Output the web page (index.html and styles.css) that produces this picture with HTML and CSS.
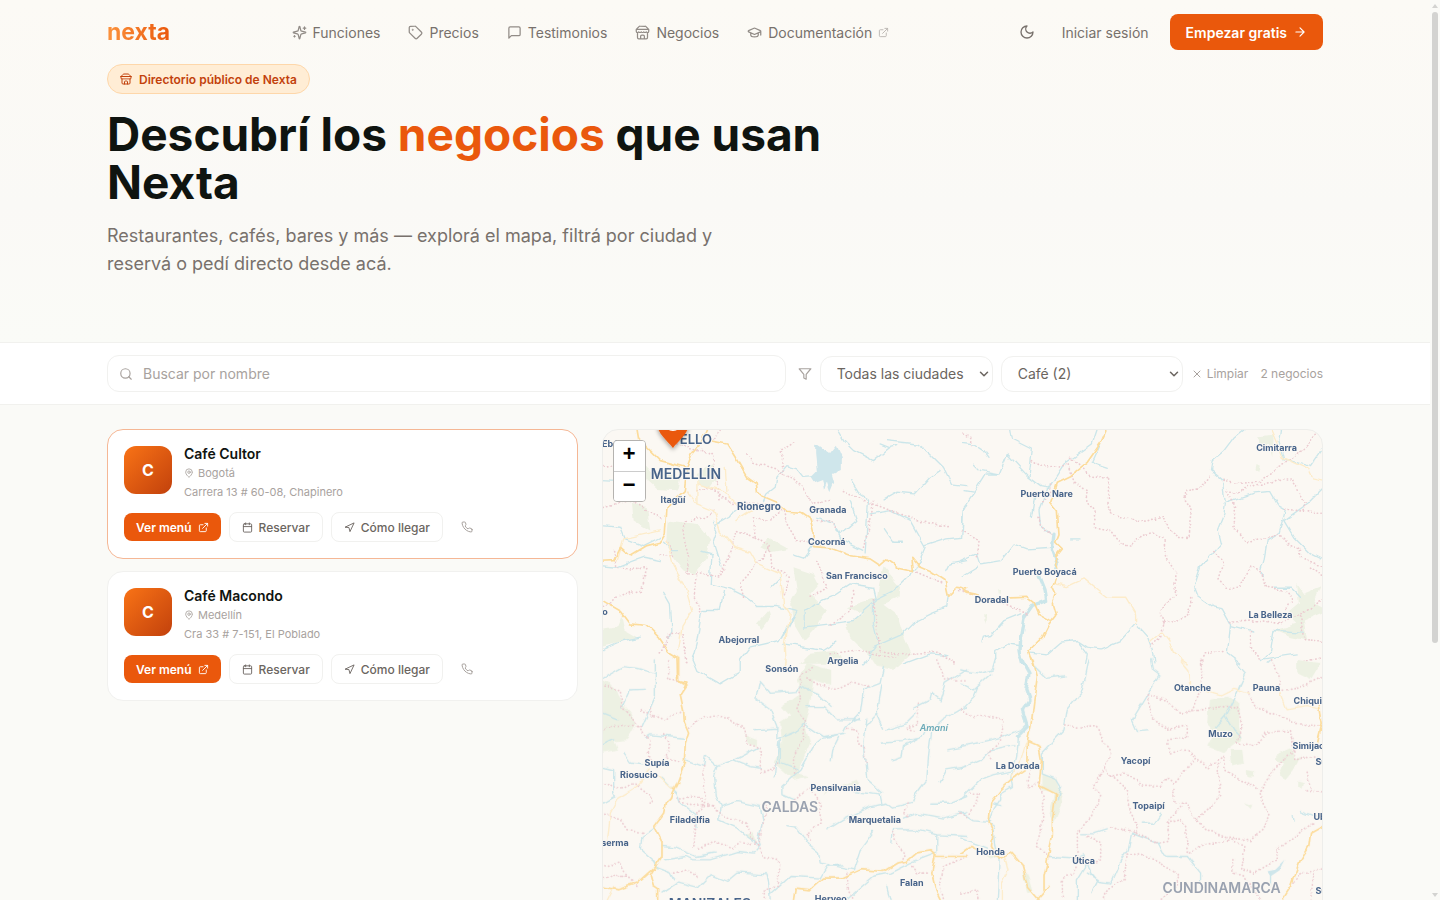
FILE: index.html
```html
<!DOCTYPE html>
<html lang="es">
<head>
<meta charset="utf-8">
<meta name="viewport" content="width=device-width, initial-scale=1">
<title>Directorio de negocios — Nexta</title>
<link rel="stylesheet" href="styles.css">
</head>
<body>
<svg class="sprite" aria-hidden="true">
  <symbol id="sparkles" viewBox="0 0 24 24"><path d="M9.94 15.5A2 2 0 0 0 8.5 14.06l-6.14-1.58a.5.5 0 0 1 0-.96L8.5 9.94A2 2 0 0 0 9.94 8.5l1.58-6.14a.5.5 0 0 1 .96 0L14.06 8.5a2 2 0 0 0 1.44 1.44l6.14 1.58a.5.5 0 0 1 0 .96L15.5 14.06a2 2 0 0 0-1.44 1.44l-1.58 6.14a.5.5 0 0 1-.96 0zM20 3v4M22 5h-4M4 17v2M5 18H3"/></symbol>
  <symbol id="tag" viewBox="0 0 24 24"><path d="M12.59 2.59A2 2 0 0 0 11.17 2H4a2 2 0 0 0-2 2v7.17a2 2 0 0 0 .59 1.42l8.7 8.7a2.43 2.43 0 0 0 3.42 0l6.58-6.58a2.43 2.43 0 0 0 0-3.42z"/><circle cx="7.5" cy="7.5" r=".5"/></symbol>
  <symbol id="message" viewBox="0 0 24 24"><path d="M21 15a2 2 0 0 1-2 2H7l-4 4V5a2 2 0 0 1 2-2h14a2 2 0 0 1 2 2z"/></symbol>
  <symbol id="store" viewBox="0 0 24 24"><path d="m2 7 4.41-4.41A2 2 0 0 1 7.83 2h8.34a2 2 0 0 1 1.42.59L22 7M4 12v8a2 2 0 0 0 2 2h12a2 2 0 0 0 2-2v-8M15 22v-4a2 2 0 0 0-2-2h-2a2 2 0 0 0-2 2v4M2 7h20M22 7v3a2 2 0 0 1-2 2 2.7 2.7 0 0 1-1.59-.63.7.7 0 0 0-.82 0A2.7 2.7 0 0 1 16 12a2.7 2.7 0 0 1-1.59-.63.7.7 0 0 0-.82 0A2.7 2.7 0 0 1 12 12a2.7 2.7 0 0 1-1.59-.63.7.7 0 0 0-.82 0A2.7 2.7 0 0 1 8 12a2.7 2.7 0 0 1-1.59-.63.7.7 0 0 0-.82 0A2.7 2.7 0 0 1 4 12a2 2 0 0 1-2-2V7"/></symbol>
  <symbol id="cap" viewBox="0 0 24 24"><path d="M21.42 10.92a1 1 0 0 0-.02-1.84L12.83 5.18a2 2 0 0 0-1.66 0L2.6 9.08a1 1 0 0 0 0 1.83l8.57 3.91a2 2 0 0 0 1.66 0zM22 10v6M6 12.5V16a6 3 0 0 0 12 0v-3.5"/></symbol>
  <symbol id="external" viewBox="0 0 24 24"><path d="M15 3h6v6M10 14 21 3M18 13v6a2 2 0 0 1-2 2H5a2 2 0 0 1-2-2V8a2 2 0 0 1 2-2h6"/></symbol>
  <symbol id="moon" viewBox="0 0 24 24"><path d="M12 3a6 6 0 0 0 9 9 9 9 0 1 1-9-9"/></symbol>
  <symbol id="arrow" viewBox="0 0 24 24"><path d="M5 12h14M12 5l7 7-7 7"/></symbol>
  <symbol id="search" viewBox="0 0 24 24"><circle cx="11" cy="11" r="8"/><path d="m21 21-4.3-4.3"/></symbol>
  <symbol id="funnel" viewBox="0 0 24 24"><path d="M22 3H2l8 9.46V19l4 2v-8.54z"/></symbol>
  <symbol id="close" viewBox="0 0 24 24"><path d="M18 6 6 18M6 6l12 12"/></symbol>
  <symbol id="chevron" viewBox="0 0 24 24"><path d="m5 8.500 7 7 7-7"/></symbol>
  <symbol id="pin" viewBox="0 0 24 24"><path d="M20 10c0 5-5.54 10.190-7.400 11.800a1 1 0 0 1-1.200 0C9.540 20.190 4 15 4 10a8 8 0 0 1 16 0"/><circle cx="12" cy="10" r="3"/></symbol>
  <symbol id="calendar" viewBox="0 0 24 24"><path d="M8 2v4M16 2v4M3 10h18"/><rect x="3" y="4" width="18" height="18" rx="2"/></symbol>
  <symbol id="navigate" viewBox="0 0 24 24"><path d="m3 11 19-9-9 19-2-8z"/></symbol>
  <symbol id="phone" viewBox="0 0 24 24"><path d="M22 16.920v3a2 2 0 0 1-2.180 2 19.790 19.790 0 0 1-8.630-3.070 19.500 19.500 0 0 1-6-6 19.790 19.790 0 0 1-3.070-8.670A2 2 0 0 1 4.110 2h3a2 2 0 0 1 2 1.720c.127.960.361 1.903.700 2.810a2 2 0 0 1-.450 2.110L8.090 9.910a16 16 0 0 0 6 6l1.270-1.270a2 2 0 0 1 2.110-.450c.907.339 1.850.573 2.810.700A2 2 0 0 1 22 16.920z"/></symbol>
</svg>

<div class="page">
  <div class="top">
    <header class="container header">
      <a class="brand" href="#">nexta</a>
      <nav class="nav" aria-label="Principal">
        <a href="#"><svg class="icon"><use href="#sparkles"/></svg>Funciones</a>
        <a href="#"><svg class="icon"><use href="#tag"/></svg>Precios</a>
        <a href="#"><svg class="icon"><use href="#message"/></svg>Testimonios</a>
        <a href="#"><svg class="icon"><use href="#store"/></svg>Negocios</a>
        <a href="#"><svg class="icon"><use href="#cap"/></svg>Documentación<svg class="icon icon-ext"><use href="#external"/></svg></a>
      </nav>
      <div class="actions">
        <button class="theme" type="button" aria-label="Cambiar tema"><svg class="icon"><use href="#moon"/></svg></button>
        <a class="login" href="#">Iniciar sesión</a>
        <a class="cta" href="#">Empezar gratis<svg class="icon"><use href="#arrow"/></svg></a>
      </div>
    </header>
    <section class="container hero">
      <span class="badge"><svg class="icon"><use href="#store"/></svg>Directorio público de Nexta</span>
      <h1>Descubrí los <span>negocios</span> que usan Nexta</h1>
      <p>Restaurantes, cafés, bares y más — explorá el mapa, filtrá por ciudad y reservá o pedí directo desde acá.</p>
    </section>
  </div>

  <div class="filters">
    <form class="container filter-row">
      <div class="search">
        <svg class="icon"><use href="#search"/></svg>
        <input type="text" aria-label="Buscar por nombre" placeholder="Buscar por nombre">
      </div>
      <svg class="icon funnel"><use href="#funnel"/></svg>
      <div class="select">
        <select aria-label="Ciudad"><option>Todas las ciudades</option><option>Bogotá</option><option>Medellín</option></select>
        <svg class="icon"><use href="#chevron"/></svg>
      </div>
      <div class="select select-wide">
        <select aria-label="Categoría"><option>Café (2)</option></select>
        <svg class="icon"><use href="#chevron"/></svg>
      </div>
      <button class="clear" type="button"><svg class="icon"><use href="#close"/></svg>Limpiar</button>
      <span class="count">2 negocios</span>
    </form>
  </div>

  <main class="container results">
    <div class="list">
      <article class="card card-active">
        <div class="summary">
          <div class="avatar">C</div>
          <div class="info">
            <h2>Café Cultor</h2>
            <p class="city"><svg class="icon"><use href="#pin"/></svg>Bogotá</p>
            <p>Carrera 13 # 60-08, Chapinero</p>
          </div>
        </div>
        <div class="links">
          <a class="btn btn-main" href="#">Ver menú<svg class="icon"><use href="#external"/></svg></a>
          <a class="btn" href="#"><svg class="icon"><use href="#calendar"/></svg>Reservar</a>
          <a class="btn" href="#"><svg class="icon"><use href="#navigate"/></svg>Cómo llegar</a>
          <a class="call" href="#" aria-label="Llamar"><svg class="icon"><use href="#phone"/></svg></a>
        </div>
      </article>
      <article class="card">
        <div class="summary">
          <div class="avatar">C</div>
          <div class="info">
            <h2>Café Macondo</h2>
            <p class="city"><svg class="icon"><use href="#pin"/></svg>Medellín</p>
            <p>Cra 33 # 7-151, El Poblado</p>
          </div>
        </div>
        <div class="links">
          <a class="btn btn-main" href="#">Ver menú<svg class="icon"><use href="#external"/></svg></a>
          <a class="btn" href="#"><svg class="icon"><use href="#calendar"/></svg>Reservar</a>
          <a class="btn" href="#"><svg class="icon"><use href="#navigate"/></svg>Cómo llegar</a>
          <a class="call" href="#" aria-label="Llamar"><svg class="icon"><use href="#phone"/></svg></a>
        </div>
      </article>
    </div>

    <div class="map">
      <svg class="map-canvas" viewBox="602 430 720 640" preserveAspectRatio="xMinYMin slice" role="img" aria-label="Mapa de negocios">
        <defs>
          <filter id="rough" filterUnits="userSpaceOnUse" x="590" y="420" width="750" height="500" color-interpolation-filters="sRGB">
            <feTurbulence type="fractalNoise" baseFrequency="0.08" numOctaves="2" seed="4"/>
            <feDisplacementMap in="SourceGraphic" scale="6" xChannelSelector="R" yChannelSelector="G"/>
          </filter>
          <filter id="shade" x="-50%" y="-50%" width="200%" height="200%"><feDropShadow dx="0" dy="2" stdDeviation="2" flood-color="#000" flood-opacity=".35"/></filter>
        </defs>
        <g filter="url(#rough)">
          <g transform="translate(596 424) scale(.33333)">
            <path class="park" d="M215 290L300 300L340 350L330 400L290 450L250 430L210 370ZM105 240L150 250L160 320L110 290ZM590 430L650 450L665 480L640 510L690 560L650 620L620 650L590 600L580 540L600 500ZM860 430L910 490L905 520L860 540L900 570L915 620L945 690L900 730L820 700L760 640L750 600L800 570L750 550L840 520L850 470ZM640 690L720 680L740 720L610 720ZM10 620L60 610L75 570L85 620L120 640L50 660L10 670ZM490 370L520 345L575 375L520 385ZM480 600L515 560L520 580L490 620ZM110 80L160 140L250 160L240 200L180 195L130 150ZM300 150L350 120L370 150L340 190L300 180Z"/>
            <path class="lake" d="M655 60L700 90L720 65L735 100L735 135L705 150L712 175L700 205L690 175L682 198L676 165L650 175L640 160L660 140L655 90Z"/>
            <path class="river" d="M10 170L60 172L110 210M10 305L70 310L85 345L140 365L190 340M10 425L60 430L110 410L140 400L190 410M315 382L345 390L340 480L400 495L440 515L480 545L540 545L600 560L550 650L460 670L430 710L430 745L370 780L300 740L285 705L300 650L315 560L370 560L380 500M200 505L220 540L225 620L215 640M350 295L360 320L350 350L375 430M430 240L400 280L355 305M500 230L510 210L535 190L540 160L570 125L600 135L620 160L650 158M765 170L790 210L815 225L810 310L805 390M660 280L710 300L730 330L780 290L760 230M720 320L735 350L800 380M865 225L900 205L955 210L1000 160L1030 140M720 15L740 50L770 80L830 110L880 70L900 65M850 60L880 72M870 50L960 60L1000 90L1040 130L1065 180L1110 185M820 270L880 260L940 290L985 370L960 430L890 500L830 530L830 600L845 660L800 720M985 365L1050 345L1095 340L1100 260L1110 240M1050 440L1060 420L1110 410M590 390L620 400L650 360M620 610L700 600L770 590L840 530L830 490L760 480L700 520L650 540L625 560L625 610M830 670L920 630L960 590L1000 570L1050 550L1055 510M860 310L890 355L920 355M200 355L225 380L245 380M550 460L520 490M560 660L680 680L720 655M10 680L80 650L130 640M600 560L560 640M920 720L1000 690L1050 695"/>
            <path class="border" d="M240 15L240 60L350 90L360 190L370 230M300 200L340 190L400 235L510 240M10 130L60 120L80 160L60 190M50 380L60 430L150 435L130 500L80 510L10 550M190 390L230 400L210 350M265 290L260 340L275 400L270 450L300 450L290 500L310 570M300 445L370 460L400 380L415 320L475 340L470 280L520 290L560 250M350 260L330 280L280 290M475 340L520 370L525 430L580 460L560 520M440 520L430 480L490 410L520 370M450 90L470 115L540 135L560 150L620 190L640 235L700 230M560 260L570 300L600 350L650 360M830 230L820 300L800 370M740 200L830 240L960 290L1060 310M660 410L680 460L690 490L640 520M770 500L760 560L700 600M830 530L840 600L850 680L900 690L1020 685L1080 720M960 445L1040 480M700 690L770 680L900 700M190 690L220 625L260 630L270 720M560 150L550 80L600 50M370 15L350 50M10 250L100 230L200 290M650 290L700 290L720 320"/>
            <path class="minor" d="M300 170L300 240L350 260L370 320L410 370L460 385L480 420L550 450L560 540L580 570L565 660L568 720M210 350L230 430L262 480L285 560L255 610L245 680M300 180L380 200L420 240L465 260L420 290M300 240L270 200M60 410L80 345L190 320M385 130L390 200"/>
            <path class="road" d="M120 15L125 45L190 110L265 130M330 15L310 60L285 90L270 130L262 200L210 250L205 330L190 355L150 365L100 395L70 370L50 410L10 412M340 50L390 60L415 100L450 160L478 180L482 210L540 235L570 262L610 265L640 285L652 330L650 368L700 372L760 395L820 405L850 425L870 408L900 430L950 440L945 400L965 425L1000 440L1045 470L1055 515L1080 490L1110 495M10 525L70 560L100 600L150 605L185 640L215 685L240 700L242 770L270 775L250 810"/>
          </g>
          <g transform="translate(960 424) scale(.33333)">
            <path class="park" d="M1010 480L1030 510L1080 490L1060 540L1100 560L1030 590L1040 650L990 640L940 620L1010 600L980 570L1015 540ZM890 40L940 35L935 100L925 60L895 60ZM885 120L895 125L890 145L882 135ZM112 495L118 500L115 510ZM68 570L76 575L74 600L68 590Z"/>
            <path class="river river-wide" d="M280 325L275 380L290 420L282 440M232 455L250 500L255 530L215 545L190 580L180 640L178 680L185 720"/>
            <path class="river" d="M410 15L395 60L340 100L310 120L265 190L240 185L200 155L140 90L115 150L75 150L40 205L10 200M115 150L60 140L40 120M5 320L8 250L40 205M150 15L155 45L215 75L205 155M420 60L395 115L440 130M0 55L40 60L70 80L85 100M265 180L235 260L240 310L280 330M225 220L215 280M275 370L200 375L160 360L120 410L60 420L50 390L0 412M0 460L50 430M330 345L355 345M180 570L130 590L90 635L65 640L60 658M105 720L105 680L140 660L175 665M210 685L260 690L300 655L350 650L380 670L420 675L480 650L525 600L560 640L575 680L580 720M350 650L380 690L375 720M850 15L820 40L790 80L755 110L750 140L785 170L795 240L790 270L770 320L780 360L720 430L700 490L710 515L760 550L785 555L810 600L800 690L840 720M790 240L880 210L930 205L950 240L975 255L955 330L920 350L910 410L900 445L910 455M970 290L1000 340L1050 390L1080 405M970 290L1040 240L1090 190M960 15L955 50L970 105L1050 128L1090 70M810 605L880 625M900 710L930 680L940 620L1030 625M910 705L1010 690M940 490L990 490L1020 520"/>
            <path class="border" d="M10 30L30 40L30 70M215 110L240 130L310 125L325 120L340 175L380 200L375 235L400 260L405 310L450 320L480 365L515 370L540 335L580 325L610 345L615 400L650 445L640 480L650 510L595 560L610 600L600 640L570 670M330 100L380 150L445 165L440 200L450 270L490 285L560 292L610 275L625 320L660 342L685 340L695 260L670 225L680 200L715 195L750 155M610 600L680 580L695 515M790 172L830 178L900 175L980 110L1010 95L1065 30M800 200L830 205L860 185L900 185L960 165L995 165L1035 240L1025 265M800 200L825 250L820 310L860 358L900 350L955 330L990 365L1020 375L1020 400L1090 430M975 255L1050 265L1090 265M760 380L790 420L775 470L795 490L840 490L870 430L905 450L915 490L980 500L995 530L975 560M810 595L900 590L960 600L1040 560L1090 520M870 625L870 670L900 710M720 720L730 690L795 682M1020 575L1030 650L1090 655M1050 430L1090 460M0 320L55 350L50 400M0 500L40 510L130 540L200 570M235 280L240 310L280 330M270 180L270 210L240 240M1020 715L1090 700"/>
            <path class="minor" d="M280 480L320 488L370 465L420 505L440 520L495 520L525 570L525 600M570 655L605 625L625 650L640 690L680 720M930 15L950 60L965 100L1040 135L1055 165L1090 172"/>
            <path class="road" d="M440 15L425 50L380 115L330 155L290 175L270 235L290 260L295 330L285 355L305 375L285 400L292 440L275 490L285 510L275 540L285 575L265 600L245 640L205 680L220 725M0 490L20 505L55 512M150 522L200 520L220 535L235 570L268 588"/>
          </g>
          <g transform="translate(596 660) scale(.33333)">
            <path class="park" d="M10 60L60 90L75 130L100 160L115 195L90 240L50 245L60 270L10 280ZM630 10L700 30L700 75L650 60L640 130L625 190L640 250L600 340L635 350L590 360L530 310L555 250L550 190L580 170L555 140L610 100L600 60ZM440 225L480 240L480 255L455 250ZM440 525L470 520L480 550ZM820 -10L910 -10L890 30L840 20ZM780 360L790 375L700 390L680 410L690 390Z"/>
            <path class="river" d="M175 0L175 110L135 200M10 60L80 20L120 25L175 40M10 160L60 180M75 145L100 90L145 88M10 260L50 240M145 235L160 225L260 235M10 320L50 330L50 400L55 410L20 430M265 300L320 320L325 290L360 320L410 300L485 260M360 320L350 350L355 410L370 440L420 425L490 440L498 480L485 540L490 555L470 580L420 575L340 600L290 600L270 590L205 600M195 355L240 400L250 430L300 470L300 500M370 440L365 480L420 505L450 530L485 555M410 300L460 320L490 325M350 580L300 590L240 565L195 560M80 280L100 310L140 315M170 505L135 530L130 570L170 605L180 625L220 640L230 660M195 700L240 670L300 685L340 645L390 665L420 640L510 645L515 665L520 720M520 705L580 650L670 655L690 620L740 615M570 500L600 505L640 560L665 580L670 610L770 630L790 570L830 515M690 510L740 480L820 440L870 430L890 445L950 430L960 400L990 360L995 290L1005 210L1040 180L1110 140M770 395L850 405L855 430M855 400L810 360L800 260L810 180M750 200L740 220L680 235L650 260L610 330L555 380L555 405L590 420M750 200L790 160L800 90L850 70L860 20M490 70L480 120L520 150L540 200L540 240L600 215L620 190L680 230L750 220M470 210L540 205M550 240L550 310L600 330M550 240L535 350M630 140L680 140L720 180L790 180M490 65L520 100L600 95L610 80L660 100L700 140M725 230L705 270L700 300M300 590L355 580M790 175L760 190M855 75L840 160L860 205M845 160L810 200M870 210L930 190L960 160M850 250L920 245L970 235L990 195M885 300L915 290L920 260L960 240M950 145L1000 120L1005 100L1030 120L1045 70L1110 30M1050 270L1110 260M1030 365L1050 330L1110 320M1005 430L1060 430L1110 410M920 475L960 460L1040 475L1110 455M885 550L890 510L960 510L1020 525L1110 530M1020 525L1020 580L940 610L880 640L830 650L750 720M870 680L880 720"/>
            <path class="border" d="M215 0L215 60L250 65M10 80L70 90L75 140L130 210L155 240L160 320M130 200L30 200L10 230M130 150L200 180L260 150M275 205L320 170L400 175L440 210L450 250L490 260L490 340L530 330L545 310M160 145L165 175M200 225L220 260L210 290L250 310M10 370L80 385L110 370L140 390L170 420L150 430M10 460L70 480L90 510L140 515M320 320L325 430L350 435M240 415L310 410L320 440L300 460L290 570M250 425L290 440L350 435M350 435L360 460L450 490L460 530L485 555L430 545L410 565L350 545L300 570M485 555L510 440L500 430M485 555L500 590L545 600L545 680L505 690L505 720M590 420L640 385L670 430L670 490L630 525L640 545M610 50L610 120L600 150L625 190L620 230L590 290L590 350M610 50L650 20M630 60L720 90L760 70L810 75L820 80M755 205L780 215L780 250L805 265L805 310M1020 0L1045 60L1110 60M965 130L965 190L930 205L960 215M890 520L905 560L925 580L920 610M930 470L920 460L935 430M750 640L755 690L770 720M10 620L70 610L90 650L60 650M230 640L270 630L300 650M1110 590L1040 620L1030 680L1040 720M945 620L960 640L1000 640M10 650L90 650L120 680"/>
            <path class="minor" d="M30 560L40 460L60 420L110 390L160 330M185 350L230 390M565 0L560 30M30 720L50 680"/>
            <path class="road" d="M245 -5L245 60L270 75L250 105L260 150L262 190L275 220L265 250L262 310L240 370L225 400L220 420L205 435L200 460L170 500L195 550L195 590L175 620L160 645L170 680L185 690L185 720M175 620L120 670L60 690L10 680M590 720L595 685L640 690L680 655L735 655L790 630L860 635L900 610L930 605L960 580L1000 573L1020 590L1110 590M1015 590L1005 640L1020 700L1030 720"/>
          </g>
          <g transform="translate(960 660) scale(.33333)">
            <path class="park" d="M745 120L800 110L840 130L835 200L845 240L790 280L740 260L760 220L740 190ZM810 270L845 270L850 310L815 320ZM955 280L990 265L1000 300L1020 290L1000 330L975 360L955 350L970 310L945 300ZM855 330L878 335L878 350L858 350ZM1010 365L1030 370L1025 385L1010 380ZM245 340L290 355L300 400L305 430L280 490L265 470L280 400L245 395ZM60 580L110 590L90 600ZM185 640L200 640L215 690L200 700ZM1010 0L1080 10L1050 60L1010 40ZM850 430L875 440L870 450Z"/>
            <path class="lake" d="M920 635L945 630L975 600L960 630L930 650Z"/>
            <path class="river river-wide" d="M180 -5L205 40L195 90L205 120L185 150L200 200L170 230"/>
            <path class="river" d="M105 -5L95 30L60 40L20 35L0 30M0 70L40 90L90 45M10 140L40 110L50 85M170 230L165 290L150 350L155 380L120 400L120 420L100 450L85 490L100 500L105 560L115 600L110 720M0 260L90 240L130 230L180 210L200 190M0 325L60 300L90 270L160 255M0 420L60 360L100 345L165 330M0 455L40 480L90 485M225 20L260 55L310 48M385 0L365 95L320 150L310 210L245 280L245 340L285 355L300 380L290 420M120 440L95 435M0 535L40 550L80 565M265 590L350 595L370 585L375 620L350 660L350 720M380 610L390 640L410 665L450 670L480 600L500 570L510 520L590 550L605 580L620 590L680 590L720 640L720 690M380 640L410 660L390 700M360 522L400 522L440 510M545 490L580 490L600 460M570 0L575 30L595 45L560 105L515 180L530 215L565 213M820 0L855 40L830 95L795 165L765 200M795 170L820 210L840 230M930 640L930 680M1020 455L1060 470L1090 475M995 470L998 485M920 10L930 0"/>
            <path class="border" d="M0 150L40 170L70 165L130 180L120 240L80 280L90 300M315 198L350 205L410 200L430 250L450 280L430 325L450 350L490 340L540 375L600 380L620 355L640 370L705 295L745 325L770 300L790 290M430 325L400 380L420 410L390 470L350 520L350 570L340 640L305 660L305 720M450 350L500 390L510 460L530 490L520 530M560 105L575 180L620 205L680 200L680 230L625 240L625 280L680 270L705 295M560 105L610 120L660 160L700 150L725 60L720 0M680 160L720 150L830 140L845 200L830 250L880 255L920 220L990 210L1000 270L940 330L895 400L925 460L910 510L870 540L800 535L740 510L705 480L680 430L640 430L640 380M790 290L790 330L860 370L900 395M770 300L780 410L740 450L705 480M620 490L660 480L675 500L680 580L740 550L810 540L850 560L840 630L880 640L950 600L950 570L1060 490M500 580L560 590L650 640L650 680L600 720M500 580L490 660L440 690L430 720M450 505L500 510L590 550L620 545L625 480L660 440M380 530L420 545L420 600L400 610M0 460L20 470L60 400L20 400M200 380L235 370L250 420L240 500L230 560L265 590M210 330L200 375M0 700L50 690L55 720M930 0L955 45L960 95L1000 90L1090 50M865 95L880 140L960 170L1000 190L1090 200M990 210L1000 300L1060 290L1090 310M1040 390L1090 400M1040 340L1050 390M1000 670L1020 640L1090 630M820 600L820 640L850 650L900 720M1050 720L1060 640"/>
            <path class="minor" d="M660 0L685 30L690 75M730 90L780 105L820 85L870 100M915 80L960 100L980 150L1040 140L1075 150M195 250L180 300L150 350M135 590L145 630L125 670L125 720"/>
            <path class="road" d="M215 -5L230 50L220 120L210 200L200 245L198 330L160 355L120 390L90 430L85 490L100 520L95 560L115 595L150 580L185 620L200 680L235 720M200 245L235 260L242 300L235 380L285 405L275 480L275 530L260 600L250 650L250 690M0 580L30 560L60 575L110 590M265 680L230 720M1075 130L1085 190L1070 250M1095 495L1050 520L1045 560L1020 600L1000 650L990 680L965 720"/>
          </g>
        </g>
        <g class="labels">
          <text class="city-md" x="695" y="444">ELLO</text><text class="cut" x="601" y="447">Ebéjico</text>
          <text class="city-lg" x="685" y="479">MEDELLÍN</text>
          <text x="672" y="503">Itagüí</text><text class="town" x="758" y="510">Rionegro</text><text x="827" y="513">Granada</text>
          <text x="826" y="545">Cocorná</text><text x="856" y="579">San Francisco</text><text x="738" y="643">Abejorral</text>
          <text x="842" y="664">Argelia</text><text x="781" y="672">Sonsón</text><text x="604" y="615">o</text>
          <text x="1276" y="451">Cimitarra</text><text x="1046" y="497">Puerto Nare</text><text x="1044" y="575">Puerto Boyacá</text>
          <text x="991" y="603">Doradal</text><text x="1270" y="618">La Belleza</text>
          <text x="656" y="766">Supía</text><text x="638" y="778">Riosucio</text><text x="835" y="791">Pensilvania</text>
          <text x="689" y="823">Filadelfia</text><text x="874" y="823">Marquetalia</text><text x="614" y="846">serma</text>
          <text x="911" y="886">Falan</text><text x="830" y="902">Herveo</text><text x="1017" y="769">La Dorada</text>
          <text x="990" y="855">Honda</text><text x="1083" y="864">Útica</text><text x="1135" y="764">Yacopí</text>
          <text x="1148" y="809">Topaipí</text><text x="1192" y="691">Otanche</text><text x="1266" y="691">Pauna</text>
          <text x="1220" y="737">Muzo</text>
          <text class="cut" x="1293" y="704">Chiquinquirá</text><text class="cut" x="1292" y="749">Simijaca</text>
          <text class="cut" x="1315" y="765">Susa</text><text class="cut" x="1313" y="820">Ubaté</text><text class="cut" x="1315" y="894">Suesca</text>
          <text class="water" x="933" y="731">Amaní</text>
          <text class="region" x="789" y="812">CALDAS</text><text class="region" x="1221" y="893">CUNDINAMARCA</text>
          <text class="city-lg" x="709" y="909">MANIZALES</text>
        </g>
        <g filter="url(#shade)">
          <path fill="#ea580c" d="M672 448C667 441 656 434 656 422a16 16 0 0 1 32 0c0 12-11 19-16 26z"/>
          <circle cx="672" cy="423" r="8" fill="#fff"/>
        </g>
      </svg>
      <div class="zoom">
        <button type="button" aria-label="Acercar">+</button>
        <button type="button" aria-label="Alejar">−</button>
      </div>
    </div>
  </main>
</div>

<div class="scrollbar" aria-hidden="true">
  <svg viewBox="0 0 8 5"><path d="M1 5 4 1 7 5z"/></svg>
  <div class="track"><div class="thumb"></div></div>
  <svg viewBox="0 0 8 5"><path d="M1 0 4 4 7 0z"/></svg>
</div>
</body>
</html>
```
FILE: styles.css
```css
* { box-sizing: border-box; }

body {
  margin: 0;
  display: flex;
  height: 100vh;
  overflow: hidden;
  background: #fafaf7;
  color: #0f1410;
  font-family: Inter, "Liberation Sans", sans-serif;
  font-size: 14px;
}

h1, h2, p { margin: 0; }
a { color: inherit; text-decoration: none; }
button, input, select { font: inherit; color: inherit; }
.sprite { position: absolute; width: 0; height: 0; }

.icon {
  flex: none;
  width: 14px;
  height: 14px;
  fill: none;
  stroke: currentColor;
  stroke-width: 2;
  stroke-linecap: round;
  stroke-linejoin: round;
}

.page { flex: 1; min-width: 0; }

.container {
  width: 100%;
  max-width: 1280px;
  margin: 0 auto;
  padding: 0 32px;
}

.top { background: linear-gradient(#fcfaf5, #faf9f6 60%, #fafbf7); }

.header {
  display: flex;
  align-items: center;
  justify-content: space-between;
  height: 64px;
}

.brand {
  background: linear-gradient(90deg, #fb923c, #ea580c);
  background-clip: text;
  -webkit-background-clip: text;
  color: transparent;
  font-size: 23px;
  font-weight: 700;
}

.nav { display: flex; gap: 28px; color: #78716c; }
.nav a { display: flex; align-items: center; gap: 6px; }
.nav .icon { width: 15px; height: 15px; stroke-width: 2; opacity: .8; }
.nav .icon-ext { width: 11px; height: 11px; opacity: .5; }

.actions { display: flex; align-items: center; color: #78716c; }
.theme { display: flex; margin-right: 19px; padding: 8px; border: 0; background: none; }
.theme .icon { width: 16px; height: 16px; }
.login { margin-right: 21px; }

.cta {
  display: flex;
  align-items: center;
  gap: 6px;
  height: 36px;
  padding: 0 16px;
  border-radius: 8px;
  background: #ea580c;
  color: #fff;
  font-weight: 600;
}

.hero {
  display: flex;
  flex-direction: column;
  align-items: flex-start;
  padding-bottom: 64px;
}

.badge {
  display: flex;
  align-items: center;
  gap: 7px;
  height: 30px;
  padding: 0 12px;
  border: 1px solid #fed7aa;
  border-radius: 15px;
  background: #ffedd5;
  color: #c2410c;
  font-size: 12px;
  font-weight: 600;
}
.badge .icon { width: 12px; height: 12px; }

h1 {
  max-width: 768px;
  margin-top: 16px;
  font-size: 46px;
  font-weight: 700;
  line-height: 48px;
}
h1 span { color: #ea580c; }

.hero p {
  max-width: 672px;
  margin-top: 16px;
  color: #78716c;
  font-size: 18px;
  line-height: 28px;
}

.filters {
  border-top: 1px solid #f1f1ee;
  border-bottom: 1px solid #f1f1ee;
  background: #fff;
}

.filter-row {
  display: flex;
  align-items: center;
  gap: 8px;
  padding-top: 12px;
  padding-bottom: 12px;
}

.search {
  flex: 1;
  display: flex;
  align-items: center;
  gap: 10px;
  height: 37px;
  margin-right: 4px;
  padding: 0 11px;
  border: 1px solid #f1f1ef;
  border-radius: 12px;
  color: #a8a29e;
}
.search input { flex: 1; min-width: 0; padding: 0; border: 0; outline: 0; background: none; }
.search input::placeholder { color: #a8a29e; }
.funnel { color: #a8a29e; }

.select { display: flex; align-items: center; width: 173px; color: #6b6560; }
.select select {
  appearance: none;
  width: 100%;
  height: 36px;
  padding: 0 16px;
  border: 1px solid #f1f1ef;
  border-radius: 12px;
  background: #fff;
}
.select .icon { width: 12px; height: 12px; margin-left: -15px; margin-right: 3px; stroke-width: 3; pointer-events: none; }
.select-wide { width: 182px; }

.clear {
  display: flex;
  align-items: center;
  gap: 4px;
  margin-right: 4px;
  padding: 0;
  border: 0;
  background: none;
  color: #a8a29e;
  font-size: 12px;
}
.clear .icon { width: 12px; height: 12px; }
.count { color: #a8a29e; font-size: 12px; }

.results {
  display: grid;
  grid-template-columns: minmax(0, 15fr) minmax(0, 23fr);
  align-items: start;
  gap: 24px;
  padding-top: 24px;
}

.list { display: grid; gap: 12px; }
.card {
  padding: 16px;
  border: 1px solid #f1f1ef;
  border-radius: 16px;
  background: #fff;
}
.card-active { border-color: #f5b795; }
.summary { display: flex; gap: 12px; }

.avatar {
  display: grid;
  place-items: center;
  width: 48px;
  height: 48px;
  border-radius: 12px;
  background: linear-gradient(135deg, #f97316, #c2410c);
  color: #fff;
  font-size: 16px;
  font-weight: 700;
}

.info { display: grid; gap: 3px; line-height: 16px; }
.info h2 { font-size: 14px; font-weight: 600; line-height: 16px; }
.info p { color: #a8a29e; font-size: 11px; }
.info .city { display: flex; align-items: center; gap: 4px; }
.city .icon { width: 10px; height: 10px; }

.links { display: flex; align-items: center; gap: 8px; margin-top: 12px; }
.btn {
  display: flex;
  align-items: center;
  gap: 6px;
  height: 30px;
  padding: 0 12px;
  border: 1px solid #f1f1ef;
  border-radius: 8px;
  color: #6b6560;
  font-size: 12px;
  font-weight: 500;
}
.btn .icon { width: 11px; height: 11px; }
.btn-main { height: 28px; border: 0; background: #ea580c; color: #fff; font-weight: 600; }
.call { display: flex; padding: 0 10px; color: #a8a29e; }
.call .icon { width: 12px; height: 12px; }

.map {
  position: relative;
  overflow: hidden;
  border: 1px solid #eeeeeb;
  border-radius: 16px;
  background: #fbf8f3;
}
.map-canvas { display: block; width: 100%; height: auto; }
.map-canvas path { stroke-linejoin: round; stroke-linecap: round; }
.park { fill: #edf1e3; }
.lake { fill: #cfe6eb; }
.river { fill: none; stroke: #cbe6ea; stroke-width: 4; }
.river-wide { stroke-width: 10; }
.border { fill: none; stroke: #ecccd1; stroke-width: 5; stroke-dasharray: 1 10; }
.minor { fill: none; stroke: #fdecca; stroke-width: 4; }
.road { fill: none; stroke: #fcdc9c; stroke-width: 5; }

.labels {
  fill: #48648a;
  stroke: #fbf8f3;
  stroke-width: 2px;
  paint-order: stroke;
  font-size: 9px;
  font-weight: 700;
  text-anchor: middle;
}
.labels .town { font-size: 10px; }
.labels .city-md { font-size: 13px; font-weight: 600; }
.labels .city-lg { font-size: 14px; font-weight: 600; }
.labels .region { fill: #9aa2b0; font-size: 14px; font-weight: 600; }
.labels .water { fill: #6aaab8; font-style: italic; font-weight: 600; }
.labels .cut { text-anchor: start; }

.zoom {
  position: absolute;
  top: 10px;
  left: 10px;
  display: grid;
  overflow: hidden;
  border: 1px solid #b5b3b0;
  border-radius: 4px;
}
.zoom button {
  width: 31px;
  height: 30px;
  padding: 0;
  border: 0;
  background: #fff;
  color: #000;
  font: 700 22px/30px "Liberation Mono", monospace;
}
.zoom button + button { border-top: 1px solid #ccc; }

.scrollbar {
  display: flex;
  flex-direction: column;
  align-items: center;
  gap: 4px;
  width: 10px;
  padding: 3px 0 2px;
}
.scrollbar svg { width: 8px; height: 5px; fill: #d3d3d1; }
.track { flex: 1; width: 6px; }
.thumb { height: 72%; border-radius: 3px; background: #d3d3d1; }
```
